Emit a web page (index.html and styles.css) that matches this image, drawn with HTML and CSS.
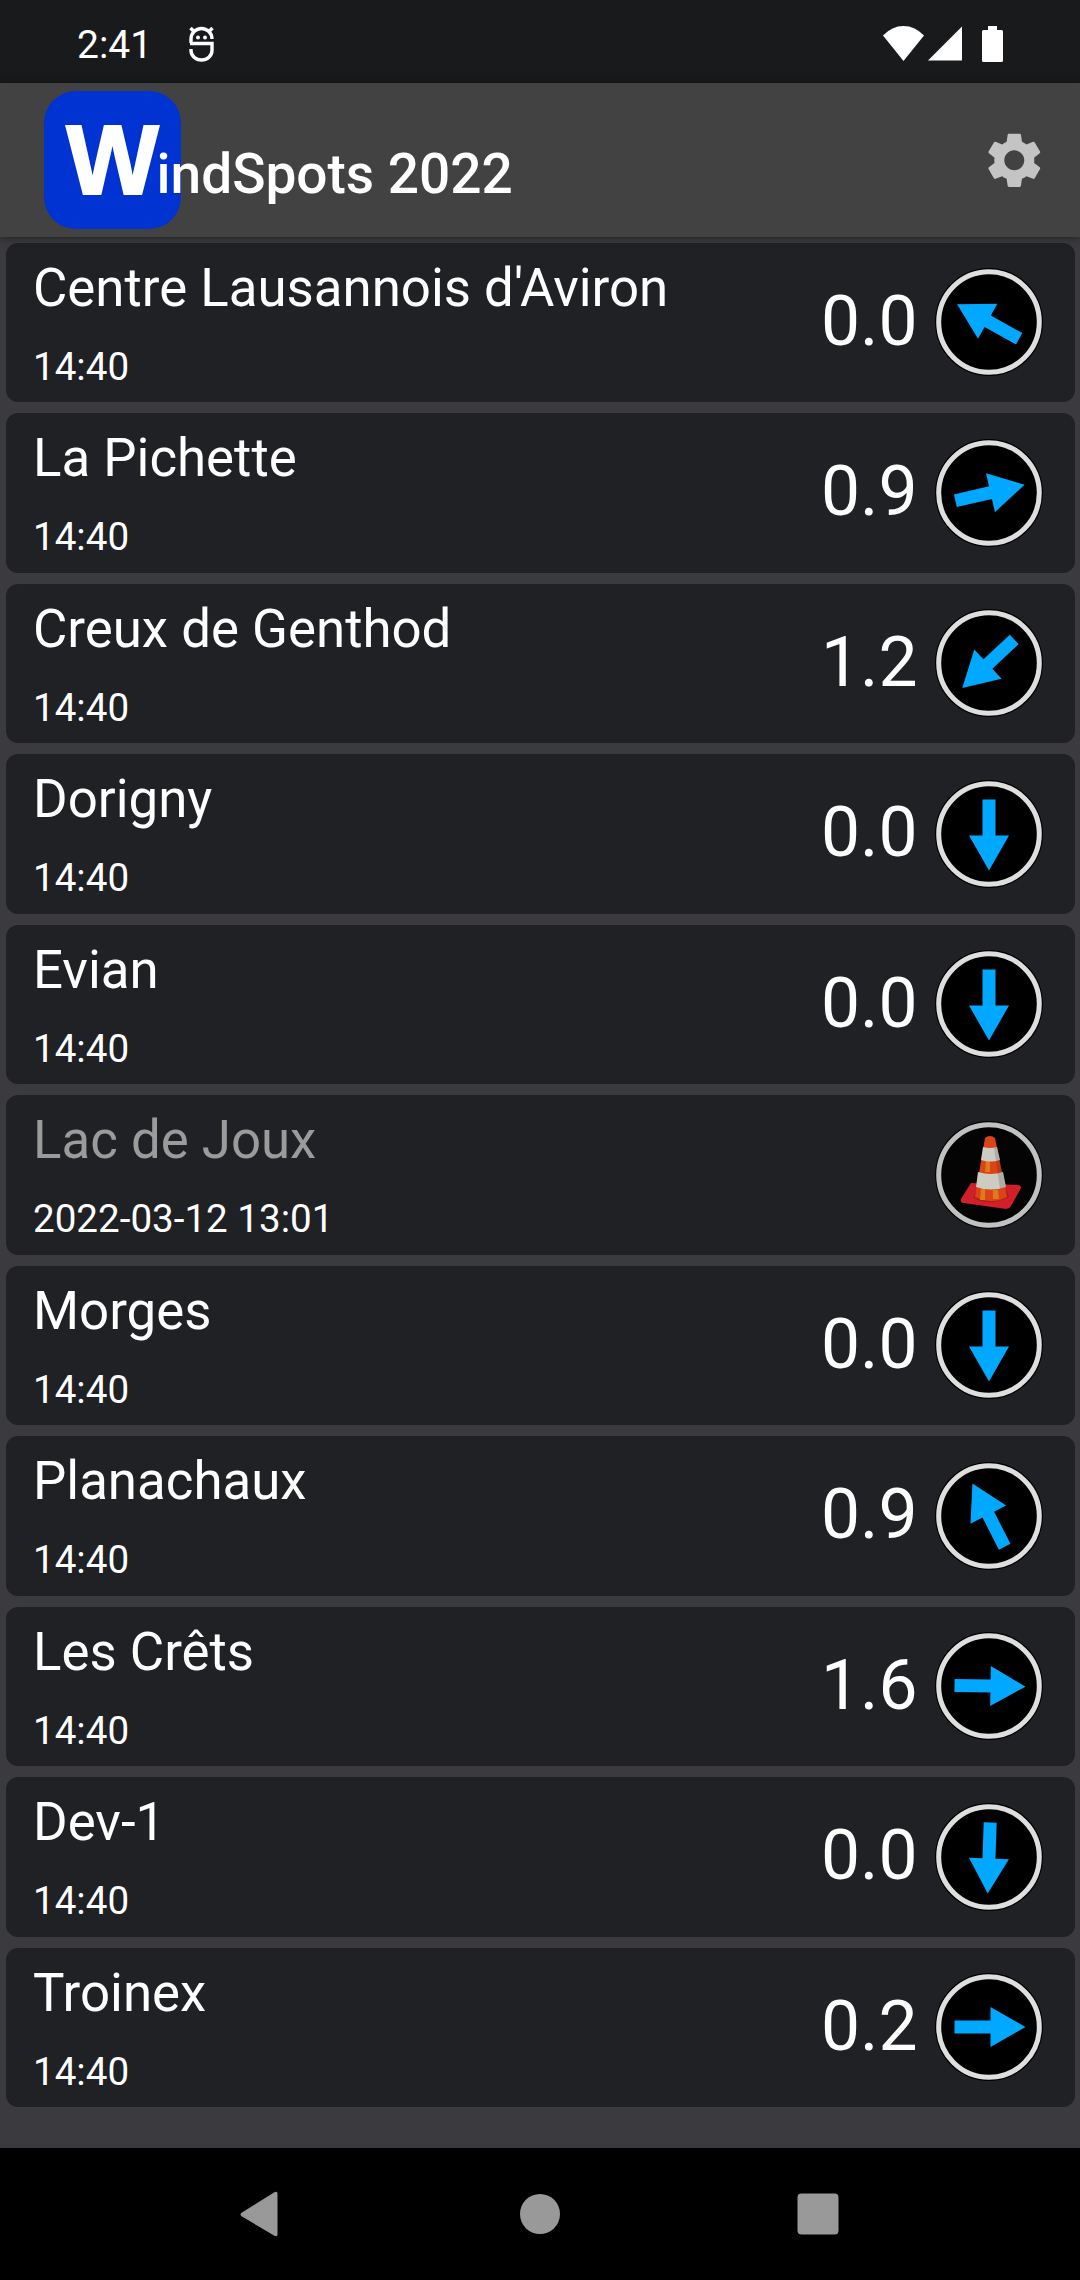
FILE: index.html
```html
<!DOCTYPE html>
<html lang="en">
<head>
    <meta charset="UTF-8">
    <title>WindSpots 2022</title>
    <link rel="stylesheet" href="styles.css">
</head>
<body>

    <div class="status-bar">
        <span class="clock">2:41</span>
        <svg class="bug" viewBox="0 0 25 36" width="25" height="36">
            <path d="M2 17v-4a10.500 10.500 0 0 1 21 0M1 17.500h22v7a10.500 9.500 0 0 1-21 0v-1.500" fill="none" stroke="#fff" stroke-width="3.400"/>
            <path d="M1.500 2l4 4M23.500 2l-4 4" stroke="#fff" stroke-width="3.500"/>
            <circle cx="9" cy="11.500" r="2" fill="#fff"/>
            <circle cx="16" cy="11.500" r="2" fill="#fff"/>
        </svg>
        <div class="status-icons">
            <svg width="41" height="35" viewBox="0 0 41 35"><path d="M0 9.500Q9 0 20.500 0T41 9.500L20.500 35z"/></svg>
            <svg width="34" height="35" viewBox="0 0 34 35"><path d="M34 0.500V34.500H0z"/></svg>
            <svg class="battery" width="21" height="36" viewBox="0 0 21 36"><path d="M6 0h9v4h4.500q1.500 0 1.500 1.500v29q0 1.500-1.500 1.500h-18q-1.500 0-1.500-1.500v-29q0-1.500 1.500-1.500h4.500z"/></svg>
        </div>
    </div>

    <div class="header">
        <div class="logo">W</div>
        <h1>indSpots 2022</h1>
        <svg class="settings" viewBox="0 0 24 24"><path d="M19.140 12.940c.04-.3.06-.61.06-.94 0-.32-.02-.64-.07-.94l2.030-1.580c.18-.14.23-.41.12-.61l-1.920-3.320c-.12-.22-.37-.29-.59-.22l-2.390.96c-.5-.38-1.030-.7-1.620-.94l-.36-2.540c-.04-.24-.24-.41-.48-.41h-3.840c-.24 0-.43.17-.47.41l-.36 2.540c-.59.24-1.130.57-1.620.94l-2.390-.96c-.22-.08-.47 0-.59.22L2.740 8.870c-.12.21-.08.47.12.61l2.030 1.580c-.05.3-.09.63-.09.94s.02.64.07.94l-2.030 1.580c-.18.14-.23.41-.12.61l1.920 3.320c.12.22.37.29.59.22l2.390-.96c.5.38 1.030.7 1.620.94l.36 2.540c.05.24.24.41.48.41h3.840c.24 0 .44-.17.47-.41l.36-2.540c.59-.24 1.130-.56 1.620-.94l2.390.96c.22.08.47 0 .59-.22l1.920-3.320c.12-.22.07-.47-.12-.61l-2.010-1.580zM12 15.600c-1.980 0-3.600-1.620-3.600-3.600s1.620-3.600 3.600-3.600 3.600 1.620 3.600 3.600-1.620 3.600-3.600 3.600z"/></svg>
    </div>

    <div class="stations" id="stations"></div>

    <div class="nav-bar">
        <svg viewBox="0 0 60 60"><path d="M10 28.500L42 8.500Q45.500 6.500 45.500 10V50Q45.500 53.500 42 51.500L10 32.500Q7 30.500 10 28.500z"/></svg>
        <svg viewBox="0 0 60 60"><circle cx="30" cy="30" r="20"/></svg>
        <svg viewBox="0 0 60 60"><rect x="9.500" y="9.500" width="41" height="41" rx="4"/></svg>
    </div>

    <script src="script.js"></script>
</body>
</html>
```
FILE: styles.css
```css
body {
    font-family: Roboto, sans-serif;
    background-color: #3b3b3f;
    color: #fff;
    margin: 0;
    height: 2280px;
    display: flex;
    flex-direction: column;
    overflow: hidden;
}
svg {
    display: block;
    flex-shrink: 0;
}
.status-bar {
    display: flex;
    align-items: center;
    box-sizing: border-box;
    height: 83px;
    padding: 4px 77px 0;
    background-color: #191a1b;
}
.clock {
    font-size: 39px;
    width: 112px;
    line-height: 40px;
    padding-top: 2px;
}
.status-icons {
    display: flex;
    align-items: center;
    gap: 4px;
    margin-left: auto;
    fill: #fff;
}
.battery {
    margin-left: 16px;
}
.header {
    display: flex;
    align-items: center;
    box-sizing: border-box;
    height: 154px;
    padding: 0 32px 0 44px;
    background-color: #424242;
    box-shadow: 0 1px 8px rgba(0,0,0,0.45);
    z-index: 1;
}
.logo {
    box-sizing: border-box;
    width: 137px;
    height: 138px;
    border-radius: 32px;
    background-color: #0033d1;
    font: bold 98px/138px "Liberation Sans", sans-serif;
    text-align: center;
    -webkit-text-stroke: 2px #fff;
}
h1 {
    font-size: 55px;
    font-weight: 500;
    line-height: 62px;
    margin: 28px 0 0 -24.500px;
}
.settings {
    width: 66.600px;
    height: 66.600px;
    margin-left: auto;
    fill: #c4c4c4;
}
.stations {
    flex: 1;
    display: flex;
    flex-direction: column;
    gap: 11px;
    padding: 5.500px 5.500px 0;
}
.station {
    display: flex;
    align-items: center;
    box-sizing: border-box;
    height: 159.500px;
    padding: 0 32px 0 27.500px;
    border-radius: 12px;
    background-color: #202124;
}
.info {
    flex: 1;
    padding-top: 2px;
}
.name {
    font-size: 52.800px;
    line-height: 62px;
}
.time {
    font-size: 38.600px;
    line-height: 46px;
    padding-top: 25px;
}
.speed {
    font-size: 69.500px;
    line-height: 82px;
    margin-right: 17px;
    padding-bottom: 1px;
}
.dial {
    width: 108px;
    height: 108px;
}
.offline .name {
    color: #9b9b9c;
}
.offline .dial {
    opacity: 0.85;
}
.nav-bar {
    display: grid;
    grid-template-columns: repeat(3, 60px);
    justify-content: center;
    align-items: center;
    gap: 218px;
    height: 132px;
    background-color: #000;
    fill: #999;
}
```
FILE: script.js
```js
const stations = [
    { name: "Centre Lausannois d'Aviron", time: '14:40', speed: '0.0', angle: 119 },
    { name: 'La Pichette', time: '14:40', speed: '0.9', angle: 257 },
    { name: 'Creux de Genthod', time: '14:40', speed: '1.2', angle: 47 },
    { name: 'Dorigny', time: '14:40', speed: '0.0', angle: 0 },
    { name: 'Evian', time: '14:40', speed: '0.0', angle: 0 },
    { name: 'Lac de Joux', time: '2022-03-12 13:01', offline: true },
    { name: 'Morges', time: '14:40', speed: '0.0', angle: 0 },
    { name: 'Planachaux', time: '14:40', speed: '0.9', angle: 153 },
    { name: 'Les Crêts', time: '14:40', speed: '1.6', angle: 271 },
    { name: 'Dev-1', time: '14:40', speed: '0.0', angle: 2 },
    { name: 'Troinex', time: '14:40', speed: '0.2', angle: 270 }
];

// dial is centred on 0,0 and the arrow points down at angle 0
const cone = `
    <path d="M-18 8L-28 24Q-29 28 -25 28L17 34Q20 34 22 31L32 13Q32 10 29 10z" fill="#f0202c"/>
    <path d="M-13 16L-16 23Q2 32 20 22L17 14z" fill="#c81f14"/>
    <path d="M-4 -37Q1 -41 6 -37L18 22Q3 30 -14 22z" fill="#ff4a14"/>
    <path d="M-8 14H-4V25H-9zM4 15H9L10 24H4zM-3 -14H1V-3H-4z" fill="#ff8c1a"/>
    <path d="M-6 -28Q1 -26 8 -28L11 -15Q2 -12 -8 -15z" fill="#eceade"/>
    <path d="M-11 -3Q2 1 14 -3L17 12Q2 17 -13 12z" fill="#eceade"/>
    <path d="M5 -27L8 -28L17 12L11 14z" fill="#000" opacity="0.15"/>`;

function dial(station) {
    const arrow = `<path d="M-6.500 -34.500H6.500V1.500H20L0 36.500L-20 1.500H-6.500z" fill="#00a8ff" transform="rotate(${station.angle})"/>`;
    return `
        <svg class="dial" viewBox="-54 -54 108 108">
            <circle r="54" fill="#000"/>
            <circle r="50.300" fill="none" stroke="#dedede" stroke-width="5"/>
            ${station.offline ? cone : arrow}
        </svg>`;
}

document.getElementById('stations').innerHTML = stations.map(station => `
    <div class="station ${station.offline ? 'offline' : ''}">
        <div class="info">
            <div class="name">${station.name}</div>
            <div class="time">${station.time}</div>
        </div>
        <div class="speed">${station.speed || ''}</div>
        ${dial(station)}
    </div>`).join('');
```
